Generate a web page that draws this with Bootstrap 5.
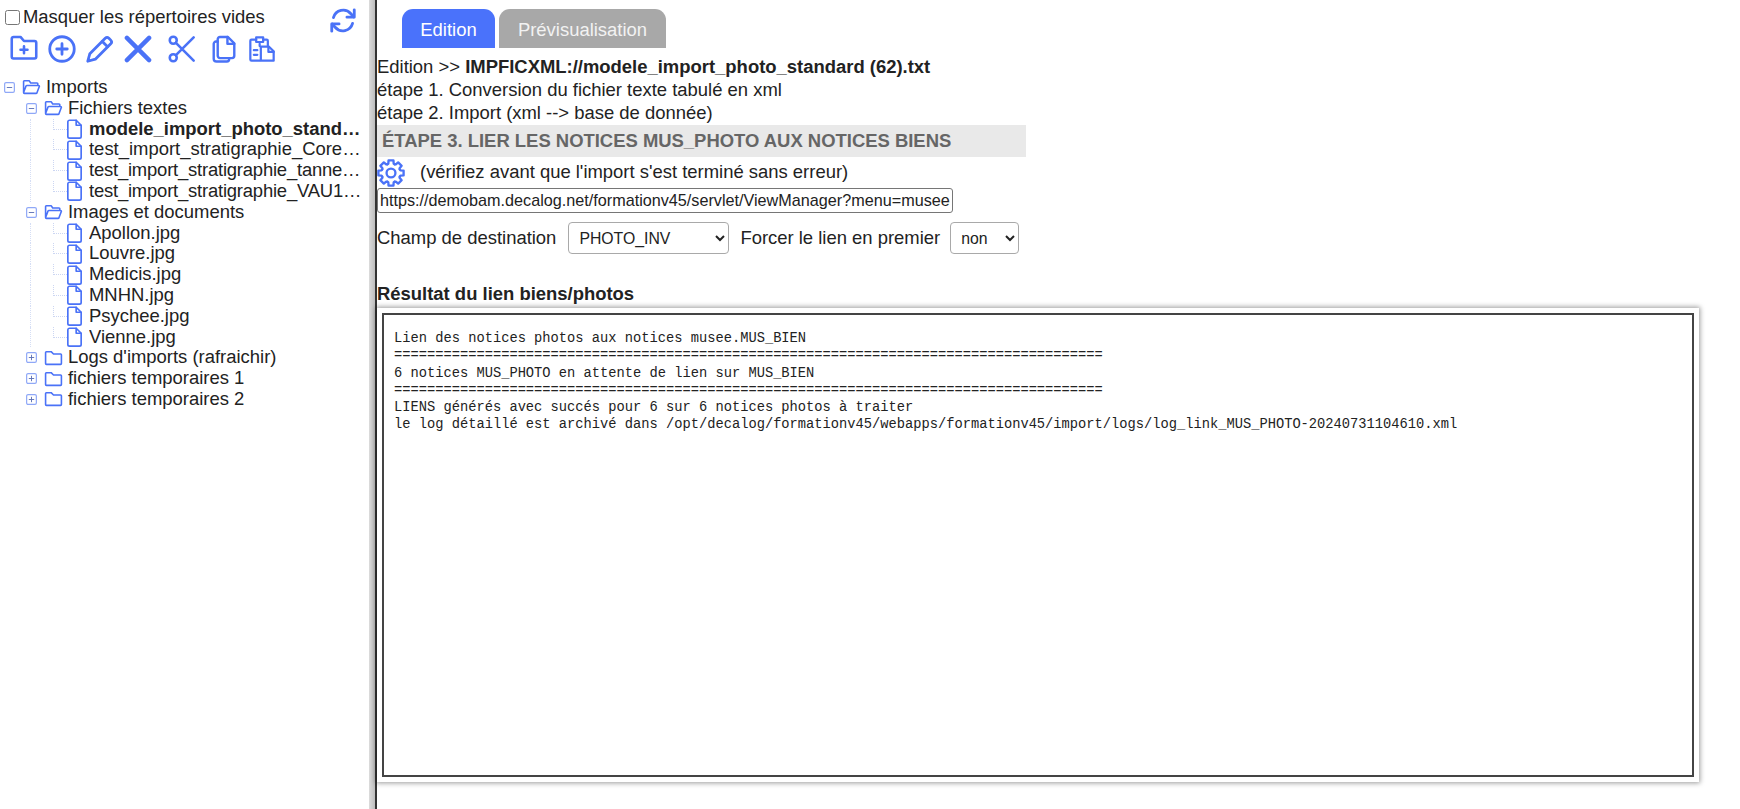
<!DOCTYPE html>
<html lang="fr">
<head>
<meta charset="utf-8">
<title>Imports</title>
<link href="https://cdn.jsdelivr.net/npm/bootstrap@5.3.0/dist/css/bootstrap.min.css" rel="stylesheet">
<style>
html,body{height:100%;}
body{font-family:"Liberation Sans",Arial,sans-serif;font-size:18.45px;line-height:20.8px;color:#222;background:#fff;overflow:hidden;}
.shell{height:809px;}
.side{width:369px;flex:none;overflow:hidden;}
.split{width:6px;flex:none;background:linear-gradient(90deg,#dcdcdc,#bdbdbd);}
.splitline{width:2px;flex:none;background:#333;}
svg.glyph{fill:none;stroke:#4a72f7;stroke-linecap:round;stroke-linejoin:round;display:block;flex:none;}
.hideline{padding:7px 0 0 5px;height:34px;gap:3px;}
.hideline input{width:15px;height:15px;margin:3px 0 0;flex:none;}
.hideline label{white-space:nowrap;}
.hideline .refresh{margin-left:61px;margin-top:0;}
.tools{padding:1px 0 0 10px;height:43px;}
.tools svg{margin-right:10px;}
.tools .wide{margin-right:16px;}
.tools .tight{margin-right:12px;}
.tree{margin-top:0;padding-left:4px;}
.trow{height:20.8px;white-space:nowrap;align-items:center;position:relative;}
.lv2{padding-left:22px;}
.lv3{padding-left:63px;}
.tog{width:11px;height:11px;flex:none;margin-right:7px;}
.fold{margin-right:5px;}
.doc{margin-right:7px;}
.lab{overflow:hidden;text-overflow:ellipsis;min-width:0;width:277px;}
.labx{letter-spacing:-.2px;width:275px;}
.guide{position:absolute;left:26px;top:0;bottom:0;border-left:1px dotted #d5def5;}
.guideh{position:absolute;left:49px;top:0;height:11px;width:14px;border-left:1px dotted #ccd6f2;border-bottom:1px dotted #ccd6f2;}
.main{min-width:0;flex:1;}
.tabstrip{padding:9px 0 0 25px;gap:4px;height:48px;}
.tabitem{height:39px;line-height:42px;border-radius:11px 11px 0 0;color:#fff;text-align:center;}
.taba{width:93px;background:#4a72fb;}
.tabb{width:167px;background:#a8a8a8;color:#f2f2f2;}
.lines{padding-top:7px;line-height:23px;height:77px;}
.stepbar{width:649px;height:32px;line-height:32px;background:#e9e9e9;color:#666;font-weight:700;font-size:18.45px;padding-left:5px;white-space:nowrap;}
.gearline{height:31px;}
.gearline span{margin-left:15px;}
.urlbox{width:576px;height:25px;border:1px solid #767676;border-radius:3px;font:16.2px "Liberation Sans",Arial,sans-serif;padding:0 2px;color:#222;display:block;}
.destline{margin-top:9px;height:32px;}
.pick{height:32px;border:1px solid #a9a9a9;border-radius:4px;background:#fff;font:15.8px "Liberation Sans",Arial,sans-serif;color:#222;padding-left:6px;}
.pick1{width:161px;margin-left:12px;}
.pick2{width:69px;margin-left:10px;}
.destline .lbl2{margin-left:11px;}
.resttl{font-weight:700;margin-top:28px;height:24px;line-height:24px;}
.logwrap{margin-top:2px;width:1322px;height:474px;padding:5px;background:#fff;box-shadow:0 0 5px 1px rgba(0,0,0,.4);}
.logbox{border:2px solid #444;height:100%;padding:15px 0 0 10px;font:13.74px/17.3px "Liberation Mono",monospace;color:#222;white-space:pre;overflow:hidden;margin:0;}
</style>
</head>
<body>
<div class="shell d-flex">
  <div class="side">
    <div class="hideline d-flex align-items-start">
      <input type="checkbox" id="mv"><label for="mv">Masquer les répertoires vides</label>
      <svg class="glyph refresh" width="28" height="27" viewBox="0 0 24 24" stroke-width="2.500"><path d="M3.500 9.500A9 9 0 0 1 19 6l2.500 2.800"/><path d="M22 2.500v6.500h-6.500"/><path d="M20.500 14.500A9 9 0 0 1 5 18l-2.500-2.800"/><path d="M2 21.500V15h6.500"/></svg>
    </div>
    <div class="tools d-flex align-items-start">
      <svg class="glyph" width="28" height="26" viewBox="0 0 24 22" stroke-width="2.200"><path d="M1.500 18.500V3a1.500 1.500 0 0 1 1.500-1.500h6l3 3.500h9a1.500 1.500 0 0 1 1.500 1.500v12a1.500 1.500 0 0 1-1.500 1.500H3a1.500 1.500 0 0 1-1.500-1.500z"/><path d="M12 9.500v6M9 12.500h6"/></svg>
      <svg class="glyph" width="28" height="28" viewBox="0 0 24 24" stroke-width="2.400"><circle cx="12" cy="12" r="10.500"/><path d="M12 7.500v9M7.500 12h9"/></svg>
      <svg class="glyph" width="28" height="28" viewBox="0 0 24 24" stroke-width="2.400"><path d="M1.500 22.500l1.800-6.500L16.500 2.800a2.200 2.200 0 0 1 3.100 0l1.600 1.600a2.200 2.200 0 0 1 0 3.100L8 20.700z"/><path d="M14 5.500l4.500 4.500"/></svg>
      <svg class="glyph wide" width="28" height="28" viewBox="0 0 24 24" stroke-width="3.800"><path d="M2.500 2.500l19 19M21.500 2.500l-19 19"/></svg>
      <svg class="glyph wide" width="28" height="28" viewBox="0 0 24 24" stroke-width="2.200"><circle cx="4.500" cy="4.500" r="3"/><circle cx="4.500" cy="19.500" r="3"/><path d="M6.800 6.800L22 22M6.800 17.200L22 2"/></svg>
      <svg class="glyph tight" width="24" height="28" viewBox="0 0 21 24" stroke-width="2.100"><path d="M7 1.500h7l5.500 5.500v11a2 2 0 0 1-2 2H7a2 2 0 0 1-2-2v-14.500a2 2 0 0 1 2-2z"/><path d="M13.500 1.500v6h6"/><path d="M5 5.500H3.500a2 2 0 0 0-2 2v13a2.500 2.500 0 0 0 2.500 2.500h9a2 2 0 0 0 2-2v-1"/></svg>
      <svg class="glyph" width="28" height="28" viewBox="0 0 24 24" stroke-width="1.900"><path d="M7 4H3a1 1 0 0 0-1 1v16a1 1 0 0 0 1 1h7"/><path d="M7 2h6v4H7z"/><path d="M13 4h3a1 1 0 0 1 1 1v4"/><path d="M11 10h7l4 4v8H11z"/><path d="M17.500 10v4.500H22"/><path d="M5 13h3M5 17h3M10 7.500v2"/></svg>
    </div>
    <div class="tree" id="tree"></div>
  </div>
  <div class="split"></div>
  <div class="splitline"></div>
  <div class="main">
    <div class="tabstrip d-flex">
      <div class="tabitem taba">Edition</div>
      <div class="tabitem tabb">Prévisualisation</div>
    </div>
    <div class="lines">
      <div class="text-nowrap">Edition &gt;&gt; <b>IMPFICXML://modele_import_photo_standard (62).txt</b></div>
      <div>étape 1. Conversion du fichier texte tabulé en xml</div>
      <div>étape 2. Import (xml --&gt; base de donnée)</div>
    </div>
    <div class="stepbar">ÉTAPE 3. LIER LES NOTICES MUS_PHOTO AUX NOTICES BIENS</div>
    <div class="gearline d-flex align-items-center">
      <svg class="glyph" width="28" height="28" viewBox="0 0 24 24" stroke-width="2">
        <defs><path id="tooth" d="M8.900 4.500L9.700 3.900 9.900 1.200H14.100L14.300 3.900 15.100 4.500"/></defs>
        <circle cx="12" cy="12" r="3.800"/>
        <use href="#tooth"/><use href="#tooth" transform="rotate(45 12 12)"/><use href="#tooth" transform="rotate(90 12 12)"/><use href="#tooth" transform="rotate(135 12 12)"/><use href="#tooth" transform="rotate(180 12 12)"/><use href="#tooth" transform="rotate(225 12 12)"/><use href="#tooth" transform="rotate(270 12 12)"/><use href="#tooth" transform="rotate(315 12 12)"/>
      </svg>
      <span>(vérifiez avant que l'import s'est terminé sans erreur)</span>
    </div>
    <input class="urlbox" type="text" value="https://demobam.decalog.net/formationv45/servlet/ViewManager?menu=musee&amp;action=link">
    <div class="destline d-flex align-items-center">
      <span>Champ de destination</span>
      <select class="pick pick1"><option>PHOTO_INV</option></select>
      <span class="lbl2">Forcer le lien en premier</span>
      <select class="pick pick2"><option>non</option></select>
    </div>
    <div class="resttl">Résultat du lien biens/photos</div>
    <div class="logwrap"><pre class="logbox">Lien des notices photos aux notices musee.MUS_BIEN
======================================================================================
6 notices MUS_PHOTO en attente de lien sur MUS_BIEN
======================================================================================
LIENS générés avec succés pour 6 sur 6 notices photos à traiter
le log détaillé est archivé dans /opt/decalog/formationv45/webapps/formationv45/import/logs/log_link_MUS_PHOTO-20240731104610.xml</pre></div>
  </div>
</div>
<svg width="0" height="0" class="position-absolute">
  <symbol id="s-open" viewBox="0 0 24 20"><path d="M2 17V3a1 1 0 0 1 1-1h6l2 3h8a1 1 0 0 1 1 1v2M2 17l3-8a1 1 0 0 1 1-1h15a1 1 0 0 1 1 1l-3 8a1 1 0 0 1-1 1H3a1 1 0 0 1-1-1z"/></symbol>
  <symbol id="s-closed" viewBox="0 0 24 20"><path d="M2 17V3a1 1 0 0 1 1-1h6l3 3h9a1 1 0 0 1 1 1v11a1 1 0 0 1-1 1H3a1 1 0 0 1-1-1z"/></symbol>
  <symbol id="s-doc" viewBox="0 0 18 24"><path d="M3 1.500h8l6 6V21a2 2 0 0 1-2 2H3a2 2 0 0 1-2-2V3.500a2 2 0 0 1 2-2z"/><path d="M11 1.500v6h6"/></symbol>
</svg>
<script>
var rows=[
[1,'open','Imports',''],[2,'open','Fichiers textes',''],
[3,'doc','modele_import_photo_standard (62).txt',' fw-bold'],[3,'doc','test_import_stratigraphie_Coresample.txt',''],[3,'doc','test_import_stratigraphie_tannerie_2024.txt',' labx'],[3,'doc','test_import_stratigraphie_VAU1_complet.txt',' labx'],
[2,'open','Images et documents',''],
[3,'doc','Apollon.jpg',''],[3,'doc','Louvre.jpg',''],[3,'doc','Medicis.jpg',''],[3,'doc','MNHN.jpg',''],[3,'doc','Psychee.jpg',''],[3,'doc','Vienne.jpg',''],
[2,'closed',"Logs d'imports (rafraichir)",''],[2,'closed','fichiers temporaires 1',''],[2,'closed','fichiers temporaires 2','']];
var h='';
rows.forEach(function(r){
 var lv=r[0],k=r[1];
 h+='<div class="trow d-flex lv'+lv+'">';
 if(lv==3){h+='<span class="guide"></span><span class="guideh"></span><svg class="glyph doc" width="15" height="20" stroke-width="2"><use href="#s-doc"/></svg><span class="lab'+r[3]+'">'+r[2]+'</span>';}
 else{
  var plus=k=='closed';
  h+='<svg class="glyph tog" viewBox="0 0 12 12" stroke-linecap="butt"><rect x=".7" y=".7" width="10.600" height="10.600" rx="1.500" stroke="#8fa8f7" stroke-width="1.300"/><path d="M3.500 6h5'+(plus?'M6 3.500v5':'')+'" stroke="#5a6fb5" stroke-width="1"/></svg>';
  h+='<svg class="glyph fold" width="19" height="18" stroke-width="2"><use href="#s-'+k+'"/></svg><span class="text-nowrap">'+r[2]+'</span>';
 }
 h+='</div>';
});
document.getElementById('tree').innerHTML=h;
</script>
<script src="https://cdn.jsdelivr.net/npm/bootstrap@5.3.0/dist/js/bootstrap.bundle.min.js"></script>
</body>
</html>
